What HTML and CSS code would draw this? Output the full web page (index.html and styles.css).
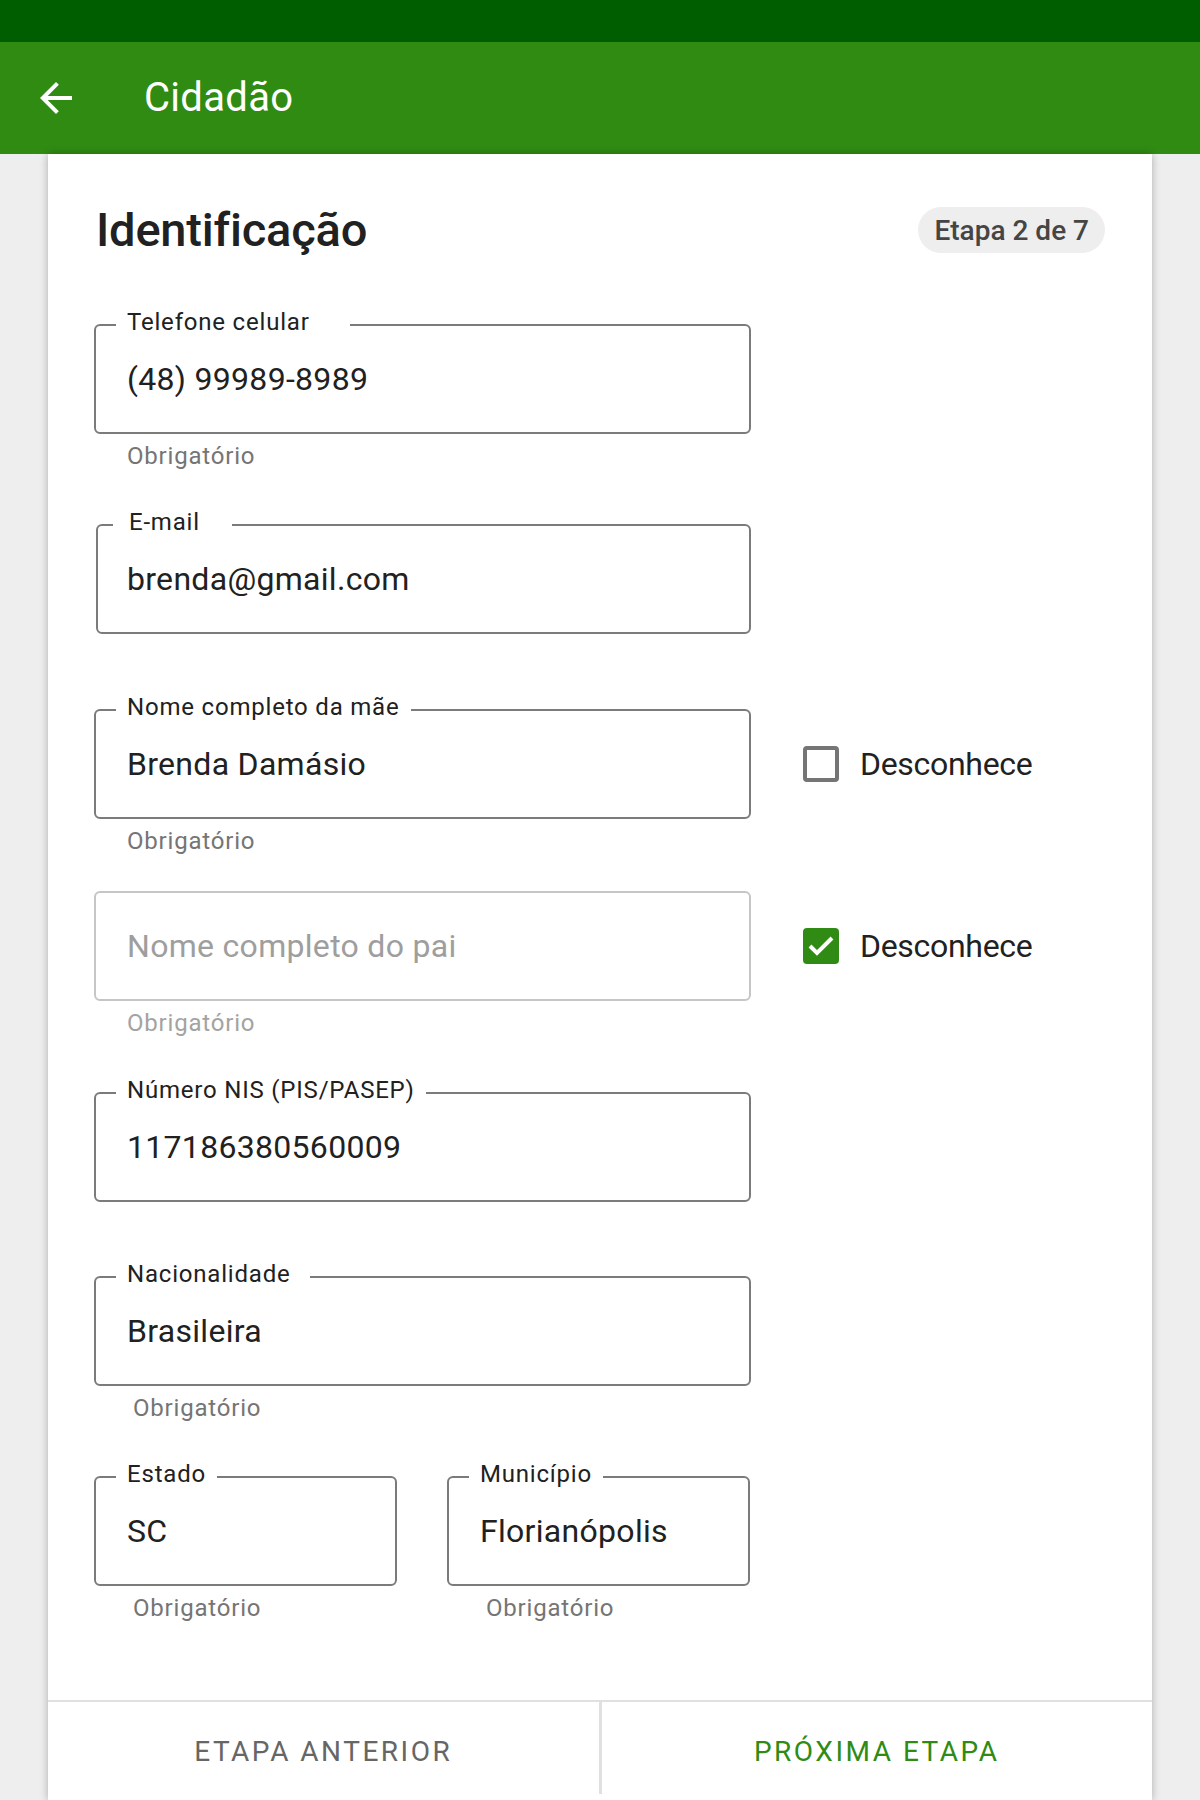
FILE: index.html
```html
<!DOCTYPE html>
<html lang="pt-BR">
<head>
<meta charset="utf-8">
<title>Cidadão</title>
<link rel="stylesheet" href="styles.css">
</head>
<body>
<div class="statusbar"></div>
<header class="appbar">
  <span class="back">
    <svg width="48" height="48" viewBox="0 0 24 24"><path fill="#fff" d="M20 11H7.83l5.59-5.59L12 4l-8 8 8 8 1.41-1.41L7.83 13H20v-2z"/></svg>
  </span>
  <h1 class="apptitle">Cidadão</h1>
</header>
<main class="card">
  <div class="content">
    <div class="head">
      <h2 class="title">Identificação</h2>
      <span class="badge">Etapa 2 de 7</span>
    </div>

    <div class="row r-phone">
      <div class="group">
        <div class="field">
          <span class="label notch-40">Telefone celular</span>
          <span class="value">(48) 99989-8989</span>
        </div>
        <div class="helper">Obrigatório</div>
      </div>
    </div>

    <div class="row r-email">
      <div class="group">
        <div class="field inset">
          <span class="label notch-32">E-mail</span>
          <span class="value">brenda@gmail.com</span>
        </div>
      </div>
    </div>

    <div class="row r-mae">
      <div class="group">
        <div class="field">
          <span class="label">Nome completo da mãe</span>
          <span class="value">Brenda Damásio</span>
        </div>
        <div class="helper">Obrigatório</div>
      </div>
      <div class="check">
        <span class="box"></span>
        <span class="check-text">Desconhece</span>
      </div>
    </div>

    <div class="row r-pai">
      <div class="group">
        <div class="field disabled">
          <span class="placeholder">Nome completo do pai</span>
        </div>
        <div class="helper muted">Obrigatório</div>
      </div>
      <div class="check">
        <svg class="box-checked" width="36" height="36" viewBox="0 0 36 36"><rect width="36" height="36" rx="4" fill="#2f8b13"/><polyline points="7,18 14,25 29,10" fill="none" stroke="#fff" stroke-width="4"/></svg>
        <span class="check-text">Desconhece</span>
      </div>
    </div>

    <div class="row r-nis">
      <div class="group">
        <div class="field">
          <span class="label">Número NIS (PIS/PASEP)</span>
          <span class="value">117186380560009</span>
        </div>
      </div>
    </div>

    <div class="row r-nac">
      <div class="group">
        <div class="field">
          <span class="label notch-18">Nacionalidade</span>
          <span class="value">Brasileira</span>
        </div>
        <div class="helper wide">Obrigatório</div>
      </div>
    </div>

    <div class="row r-loc">
      <div class="group small">
        <div class="field">
          <span class="label">Estado</span>
          <span class="value">SC</span>
        </div>
        <div class="helper wide">Obrigatório</div>
      </div>
      <div class="group small">
        <div class="field">
          <span class="label">Município</span>
          <span class="value">Florianópolis</span>
        </div>
        <div class="helper wide">Obrigatório</div>
      </div>
    </div>
  </div>

  <footer class="footer">
    <button class="fbtn prev">ETAPA ANTERIOR</button>
    <span class="vdiv"></span>
    <button class="fbtn next">PRÓXIMA ETAPA</button>
  </footer>
</main>
</body>
</html>
```

FILE: styles.css
```css
* { box-sizing: border-box; }
html, body { margin: 0; padding: 0; }
body {
  background: #eeeeee;
  font-family: Roboto, "Noto Sans", "Liberation Sans", sans-serif;
  color: #212121;
}
.statusbar { height: 42px; background: #005d00; }
.appbar {
  height: 112px;
  background: #308b13;
  display: flex;
  align-items: center;
  padding-left: 32px;
}
.back { width: 48px; height: 48px; display: block; }
.back svg { display: block; }
.apptitle {
  margin: 0 0 2px 64px;
  font-size: 40px;
  font-weight: 400;
  color: #fff;
  letter-spacing: 0.3px;
}
.card {
  margin: 0 48px;
  background: #fff;
  box-shadow: 0 0 8px rgba(0,0,0,0.28);
  min-height: 1646px;
  display: flex;
  flex-direction: column;
}
.content {
  flex: 1;
  padding: 48px 47px 0 46px;
  display: flex;
  flex-direction: column;
}
.head {
  display: flex;
  align-items: center;
  justify-content: space-between;
  height: 56px;
  padding-left: 2px;
}
.title {
  margin: 0;
  font-size: 47px;
  line-height: 56px;
  font-weight: 500;
  letter-spacing: -0.2px;
  color: #212121;
}
.badge {
  height: 46px;
  padding: 0 16px;
  border-radius: 23px;
  background: #eeeeee;
  color: #454545;
  font-size: 28px;
  font-weight: 500;
  display: flex;
  align-items: center;
}
.row { display: flex; align-items: flex-start; }
.r-phone { margin-top: 66px; }
.r-email { margin-top: 54px; }
.r-mae { margin-top: 75px; }
.r-pai { margin-top: 36px; }
.r-nis { margin-top: 55px; }
.r-nac { margin-top: 74px; }
.r-loc { margin-top: 54px; gap: 50px; }

.group { width: 657px; display: flex; flex-direction: column; }
.group.small { width: 303px; }
.field {
  position: relative;
  height: 110px;
  border: 2px solid #7b7b7b;
  border-radius: 6px;
  display: flex;
  align-items: center;
  padding-left: 31px;
}
.field.inset { margin-left: 2px; padding-left: 29px; }
.field.disabled { border-color: #c6c6c6; }
.label {
  position: absolute;
  top: -18px;
  left: 20px;
  padding: 0 11px 0 11px;
  background: #fff;
  font-size: 24px;
  line-height: 28px;
  letter-spacing: 0.8px;
  color: #212121;
  white-space: nowrap;
}
.inset .label { left: 15px; padding-left: 16px; }
.label.notch-40 { padding-right: 40px; }
.label.notch-32 { padding-right: 32px; }
.label.notch-18 { padding-right: 19px; }
.value {
  font-size: 32px;
  letter-spacing: 0.3px;
  color: #212121;
  white-space: nowrap;
}
.placeholder {
  font-size: 32px;
  letter-spacing: 0.3px;
  color: #9e9e9e;
}
.helper {
  margin-top: 8px;
  height: 28px;
  line-height: 28px;
  font-size: 24px;
  letter-spacing: 0.8px;
  color: #757575;
  padding-left: 33px;
}
.helper.wide { padding-left: 39px; }
.helper.muted { color: #a3a3a3; }

.check {
  height: 110px;
  margin-left: 52px;
  display: flex;
  align-items: center;
}
.box {
  width: 36px;
  height: 36px;
  border: 4px solid #757575;
  border-radius: 4px;
  display: block;
}
.box-checked { display: block; }
.check-text {
  margin-left: 21px;
  font-size: 32px;
  letter-spacing: -0.3px;
  color: #212121;
}

.footer {
  border-top: 2px solid #e0e0e0;
  height: 100px;
  display: flex;
  align-items: flex-start;
}
.fbtn {
  flex: 1;
  height: 98px;
  border: 0;
  background: transparent;
  font-family: Roboto, "Noto Sans", sans-serif;
  font-size: 28px;
  letter-spacing: 2.5px;
  padding: 0;
}
.prev { color: #666666; }
.next { color: #2f8b13; }
.vdiv { width: 3px; height: 92px; background: #e0e0e0; }
```
